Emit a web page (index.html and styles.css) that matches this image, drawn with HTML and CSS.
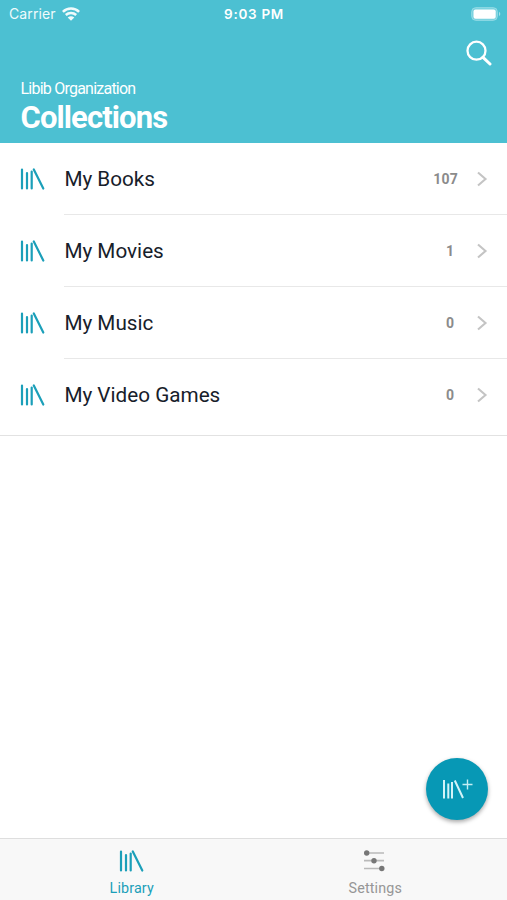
FILE: index.html
```html
<!DOCTYPE html>
<html lang="en">

<head>
    <meta charset="UTF-8">
    <meta name="viewport" content="width=device-width, initial-scale=1.0">
    <title>Collections</title>
    <link rel="stylesheet" href="styles.css">
</head>

<body>
    <svg class="defs" width="0" height="0">
        <symbol id="books" viewBox="0 0 25 22">
            <path d="M2 1.5V20.5M7 5V20.5M11.7 3.5V20.5M13.8 1.5L23.3 20.5" fill="none" stroke="currentColor" stroke-width="2.2" stroke-linecap="round" />
        </symbol>
        <symbol id="chevron" viewBox="0 0 12 16">
            <path d="M2 1.5L9.5 8L2 14.5" fill="none" stroke="currentColor" stroke-width="2.1" />
        </symbol>
    </svg>

    <header class="header">
        <div class="status-bar">
            <div class="carrier">
                <span>Carrier</span>
                <svg class="wifi" viewBox="0 0 18 14">
                    <path d="M.9 4.9C5.4 .4 12.6 .4 17.1 4.9M3.8 8C6.8 5.2 11.2 5.2 14.2 8" fill="none" stroke="currentColor" stroke-width="2.5" />
                    <path d="M9 13.8L5.7 10.5Q9 7.9 12.3 10.5Z" fill="currentColor" />
                </svg>
            </div>
            <span class="time">9:03 PM</span>
            <svg class="battery" viewBox="0 0 30 14">
                <rect x=".7" y=".7" width="25.6" height="12.6" rx="4" fill="#77d0de" stroke="#97dce6" />
                <rect x="2.5" y="2.4" width="22.2" height="9.4" rx="2" fill="#fff" />
                <path d="M28 4.8Q30.6 7 28 9.2Z" fill="#a6e0e9" />
            </svg>
        </div>
        <div class="toolbar">
            <svg class="search" viewBox="0 0 26 26">
                <circle cx="10.5" cy="10.7" r="9" fill="none" stroke="currentColor" stroke-width="2.3" />
                <path d="M17 17.3L24 24" stroke="currentColor" stroke-width="3" stroke-linecap="round" />
            </svg>
        </div>
        <div class="titles">
            <p class="organization">Libib Organization</p>
            <h1>Collections</h1>
        </div>
    </header>

    <main>
        <ul class="collections">
            <li class="collection">
                <svg class="books"><use href="#books" /></svg>
                <div class="row">
                    <span class="name">My Books</span>
                    <span class="count">107</span>
                    <svg class="chevron"><use href="#chevron" /></svg>
                </div>
            </li>
            <li class="collection">
                <svg class="books"><use href="#books" /></svg>
                <div class="row">
                    <span class="name">My Movies</span>
                    <span class="count">1</span>
                    <svg class="chevron"><use href="#chevron" /></svg>
                </div>
            </li>
            <li class="collection">
                <svg class="books"><use href="#books" /></svg>
                <div class="row">
                    <span class="name">My Music</span>
                    <span class="count">0</span>
                    <svg class="chevron"><use href="#chevron" /></svg>
                </div>
            </li>
            <li class="collection">
                <svg class="books"><use href="#books" /></svg>
                <div class="row">
                    <span class="name">My Video Games</span>
                    <span class="count">0</span>
                    <svg class="chevron"><use href="#chevron" /></svg>
                </div>
            </li>
        </ul>
    </main>

    <button class="add-button" aria-label="Add collection">
        <svg viewBox="0 0 32 22">
            <path d="M3 2V20.5M7.3 5.5V20.5M11 4V20.5M13.8 2.5L22 20" fill="none" stroke="#d3f3f8" stroke-width="2" />
            <path d="M21.5 6.5H31.5M26.5 1.5V11.5" stroke="#c4edf4" stroke-width="1.4" />
        </svg>
    </button>

    <nav class="tab-bar">
        <a class="tab active">
            <svg class="books"><use href="#books" /></svg>
            <span>Library</span>
        </a>
        <a class="tab">
            <svg class="sliders" viewBox="0 0 22 22">
                <path d="M0 3H20M0 10.7H20M0 18.5H20" stroke="#b9b9b9" stroke-width="1.7" />
                <g fill="#777">
                    <circle cx="2.7" cy="3" r="2.7" />
                    <circle cx="10" cy="10.7" r="2.7" />
                    <circle cx="17.8" cy="18.5" r="2.7" />
                </g>
            </svg>
            <span>Settings</span>
        </a>
    </nav>
</body>
</html>
```

FILE: styles.css
```css
* {
    box-sizing: border-box;
    margin: 0;
    padding: 0;
}

body {
    display: flex;
    flex-direction: column;
    height: 100vh;
    background-color: #fff;
    color: #17202a;
    font-family: Roboto, sans-serif;
    overflow: hidden;
}

svg {
    display: block;
    flex-shrink: 0;
}

.defs {
    position: absolute;
}

/* Header */
.header {
    height: 142.5px;
    flex-shrink: 0;
    background-color: #4cc0d2;
    color: #fff;
}

.status-bar {
    display: grid;
    grid-template-columns: 1fr auto 1fr;
    align-items: center;
    height: 27px;
    padding: 0 6px 0 9px;
    font-family: Inter, sans-serif;
    font-size: 14px;
}

.carrier {
    display: flex;
    align-items: center;
    gap: 6px;
    color: #f0fbfc;
    letter-spacing: 0.1px;
}

.wifi {
    width: 18px;
    height: 14px;
}

.time {
    margin-right: 2px;
    font-size: 13.5px;
    font-weight: 600;
    letter-spacing: 0.7px;
}

.battery {
    width: 30px;
    height: 14px;
    justify-self: end;
}

/* Search */
.toolbar {
    display: flex;
    justify-content: flex-end;
    padding: 13px 15px 0 0;
}

.search {
    width: 26px;
    height: 26px;
}

.titles {
    padding: 12px 20.5px 0;
}

.organization {
    font-size: 16px;
    line-height: 21px;
    letter-spacing: -0.77px;
}

h1 {
    font-size: 31px;
    line-height: 38px;
    font-weight: 700;
    letter-spacing: -0.9px;
}

/* Collection list */
.collections {
    list-style: none;
    padding-bottom: 4px;
    border-bottom: 1px solid #e2e2e2;
}

.collection {
    display: flex;
    align-items: center;
    height: 72.1px;
    padding-left: 20px;
}

.books {
    width: 25px;
    height: 22px;
    color: #1b9fb9;
}

.row {
    display: flex;
    flex: 1;
    align-items: center;
    height: 100%;
    margin-left: 19.4px;
    padding-top: 1px;
    padding-right: 19px;
    border-bottom: 1px solid #e8e8e8;
}

.collection:last-child .row {
    border-bottom: none;
}

.name {
    flex: 1;
    font-size: 20.7px;
}

.count {
    min-width: 16px;
    margin-right: 18px;
    color: #8b8b8b;
    font-size: 14px;
    font-weight: 700;
    letter-spacing: 0.2px;
    text-align: center;
}

.chevron {
    width: 12px;
    height: 16px;
    color: #c4c4c4;
}

/* Floating button */
.add-button {
    position: absolute;
    right: 19px;
    bottom: 80px;
    display: flex;
    align-items: center;
    justify-content: center;
    width: 62px;
    height: 62px;
    border: none;
    border-radius: 50%;
    background-color: #0798b5;
    box-shadow: 0 2px 4px rgba(0, 0, 0, 0.35);
}

.add-button svg {
    width: 32px;
    height: 22px;
}

/* Tab bar */
.tab-bar {
    display: flex;
    height: 62px;
    margin-top: auto;
    padding: 0 10px;
    border-top: 1px solid #dedede;
    background-color: #f8f8f8;
}

.tab {
    display: flex;
    flex: 1;
    flex-direction: column;
    align-items: center;
    gap: 7px;
    padding-top: 11px;
    color: #969696;
    font-size: 14.3px;
    line-height: 18px;
    letter-spacing: 0.15px;
}

.tab.active {
    color: #1b9fb9;
}

.sliders {
    width: 22px;
    height: 22px;
}
```
